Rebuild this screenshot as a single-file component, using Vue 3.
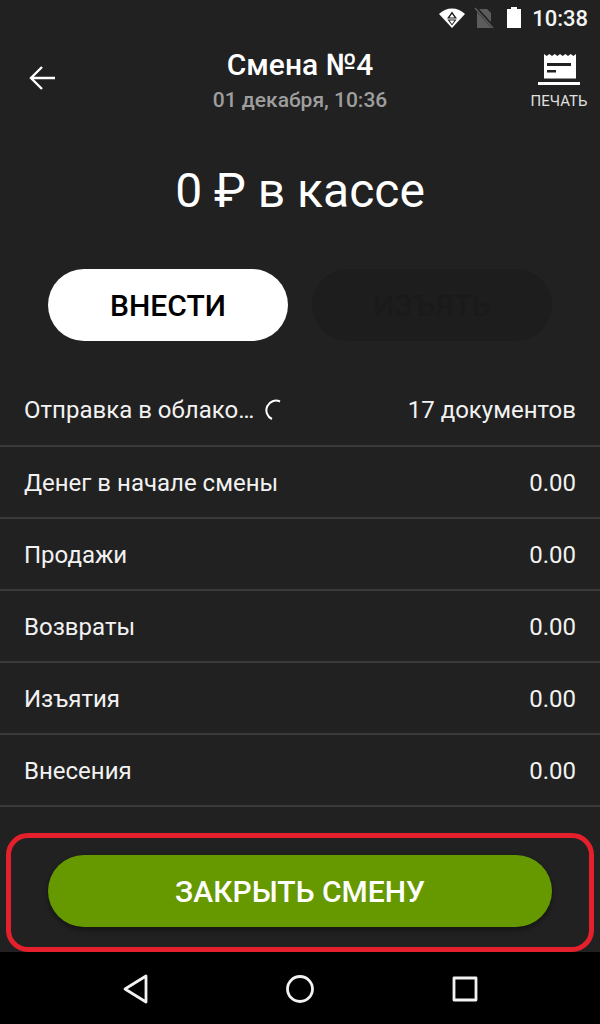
<script setup>
const rows = [
  { label: 'Денег в начале смены', value: '0.00' },
  { label: 'Продажи', value: '0.00' },
  { label: 'Возвраты', value: '0.00' },
  { label: 'Изъятия', value: '0.00' },
  { label: 'Внесения', value: '0.00' },
]
</script>

<template>
  <div class="screen">
    <div class="status">
      <svg class="wifi" width="26" height="20" viewBox="0 0 26 20">
        <path d="M13 20L0 6C3.500 2.500 8 .5 13 .5S22.500 2.500 26 6z" fill="#fff" />
        <path d="M13 3.500l-5 7h10z M8.500 11.500h9L13 17.500z" fill="#212121" />
        <path d="M13 6l-2.500 3.500h5z M10.500 12.500h5L13 16z" fill="#fff" />
      </svg>
      <svg class="nosim" width="20" height="22" viewBox="0 0 20 22">
        <path d="M3 2h10l4 4v15H3z" fill="#5c5c5c" />
        <path d="M0 -1l20 22" stroke="#212121" stroke-width="3.500" />
        <path d="M1 1l18 20" stroke="#5c5c5c" stroke-width="1.500" />
      </svg>
      <svg class="battery" width="14" height="21" viewBox="0 0 14 21">
        <path d="M4 0h6v2h4v19H0V2h4z" fill="#fff" />
      </svg>
      <span class="clock">10:38</span>
    </div>

    <header class="toolbar">
      <button class="back">
        <svg width="28" height="28" viewBox="0 0 28 28" fill="none" stroke="#fff" stroke-width="2.400">
          <path d="M27 14H3M14 3L3 14l11 11" />
        </svg>
      </button>
      <div class="heading">
        <div class="title">Смена №4</div>
        <div class="subtitle">01 декабря, 10:36</div>
      </div>
      <div class="print">
        <svg width="42" height="32" viewBox="0 0 42 32">
          <path d="M6 1l2.700 2 2.700-2 2.600 2 2.700-2 2.700 2 2.600-2 2.700 2 2.700-2 2.600 2 2.700-2 2.700 2 2.600-2v24.500H6z" fill="#fff" />
          <path d="M9 10h24v3H9zM9 17h9v2.500H9z" fill="#212121" />
          <path d="M0 29h42v3H0z" fill="#fff" />
        </svg>
        <span>ПЕЧАТЬ</span>
      </div>
    </header>

    <div class="amount">0 ₽ в кассе</div>

    <div class="actions">
      <button class="pill pill-white">ВНЕСТИ</button>
      <button class="pill pill-off">ИЗЪЯТЬ</button>
    </div>

    <div class="rows">
      <div class="row">
        <span class="cloud">Отправка в облако…
          <svg class="spin" width="20" height="22" viewBox="0 0 20 22" fill="none" stroke="#fff" stroke-width="2">
            <path d="M17 2.500A9.500 9.500 0 0 0 9 20" />
          </svg>
        </span>
        <span>17 документов</span>
      </div>
      <div class="row" v-for="r in rows" :key="r.label">
        <span>{{ r.label }}</span>
        <span>{{ r.value }}</span>
      </div>
    </div>

    <div class="footer">
      <button class="pill pill-green">ЗАКРЫТЬ СМЕНУ</button>
      <div class="highlight"></div>
    </div>

    <nav class="navbar">
      <svg width="26" height="30" viewBox="0 0 26 30" fill="none" stroke="#f2f2f2" stroke-width="2.800" stroke-linejoin="round">
        <path d="M24 2v26L3 15z" />
      </svg>
      <svg width="30" height="30" viewBox="0 0 30 30" fill="none" stroke="#f2f2f2" stroke-width="2.800">
        <circle cx="15" cy="15" r="12.500" />
      </svg>
      <svg width="26" height="26" viewBox="0 0 26 26" fill="none" stroke="#f2f2f2" stroke-width="2.800" stroke-linejoin="round">
        <rect x="2" y="2" width="22" height="22" />
      </svg>
    </nav>
  </div>
</template>

<style>
html, body { margin: 0; background: #212121; }
</style>

<style scoped>
.screen {
  width: 600px; height: 1024px; display: flex; flex-direction: column;
  background: #212121; color: #fff; font-family: Roboto, "Liberation Sans", sans-serif;
  overflow: hidden;
}
.status {
  height: 36px; flex-shrink: 0; display: flex; align-items: center; justify-content: flex-end;
  padding-right: 12px;
}
.wifi { margin-right: 9px; }
.nosim { margin-right: 13px; }
.battery { margin-right: 11px; margin-bottom: 2px; }
.clock { font-size: 22px; font-weight: 500; color: #f4f4f4; }
.toolbar { height: 84px; flex-shrink: 0; display: flex; align-items: flex-start; position: relative; }
.back {
  background: none; border: none; padding: 0; margin: 0 0 0 28px; width: 28px; height: 28px;
  position: absolute; top: 28px; left: 0;
}
.heading { flex: 1; text-align: center; padding-top: 11px; }
.title { font-size: 30px; font-weight: 500; line-height: 36px; }
.subtitle { font-size: 21px; font-weight: 500; line-height: 28px; margin-top: 3px; color: #9e9e9e; }
.print {
  position: absolute; top: 17px; right: 12px; width: 58px; display: flex; flex-direction: column;
  align-items: center; gap: 7px; font-size: 15px; line-height: 18px; color: #e0e0e0;
}
.amount { height: 70px; margin-top: 36px; margin-bottom: -1px; text-align: center; font-size: 48px; line-height: 70px; flex-shrink: 0; }
.actions { display: flex; justify-content: space-between; padding: 0 48px; margin-top: 44px; flex-shrink: 0; }
.pill {
  border: none; border-radius: 36px; height: 72px; width: 240px; padding: 0;
  font-family: inherit; font-size: 30px; font-weight: 500;
}
.pill-white { background: #fff; color: #000; }
.pill-off { background: #1d1d1d; color: #1a1a1a; }
.rows { margin-top: 34px; flex-shrink: 0; }
.row {
  height: 72px; box-sizing: border-box; display: flex; align-items: center; justify-content: space-between;
  padding: 0 24px; border-bottom: 2px solid #3a3a3a; font-size: 24px; color: #f2f2f2;
}
.row + .row { padding-top: 2px; }
.cloud { display: flex; align-items: center; gap: 9px; }
.footer { flex: 1; position: relative; display: flex; align-items: flex-start; justify-content: center; padding-top: 48px; }
.pill-green {
  width: 504px; background: #669900; color: #fff;
  box-shadow: 0 3px 5px rgba(0, 0, 0, 0.4);
}
.highlight {
  position: absolute; left: 6px; right: 6px; top: 26px; bottom: 0;
  border: 5px solid #e4202c; border-radius: 22px; box-sizing: border-box;
}
.navbar {
  height: 72px; flex-shrink: 0; background: #000; display: flex; align-items: center;
  justify-content: space-between; padding: 2px 122px 0; box-sizing: border-box;
}
</style>
